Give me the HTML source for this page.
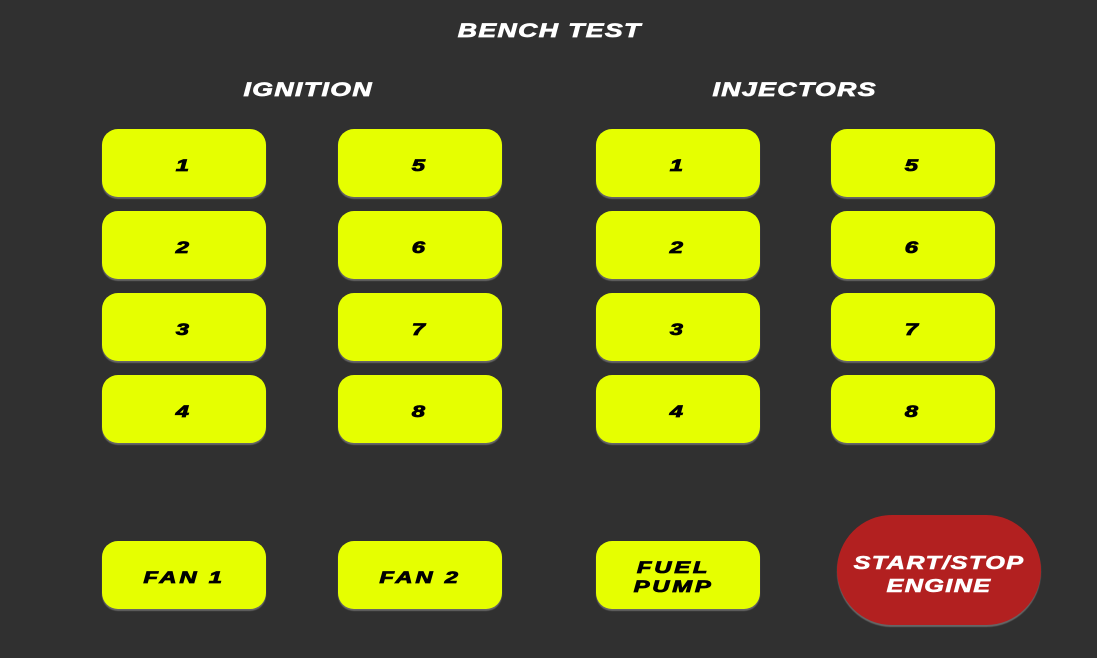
<!DOCTYPE html>
<html><head><style>
body{margin:0;width:1097px;height:658px;background:#303030;position:relative;overflow:hidden;font-family:"Liberation Sans",sans-serif;font-weight:bold;font-style:italic}
.t{position:absolute;color:#fff;text-align:center;letter-spacing:1px;-webkit-text-stroke:0.7px #fff}
.b{position:absolute;width:164px;height:68px;padding-top:4px;box-sizing:border-box;background:#e6ff00;border-radius:16px;box-shadow:0 2px 1px #666;display:flex;align-items:center;justify-content:center;color:#000;font-size:17px;letter-spacing:2px;text-align:center;line-height:19px;-webkit-text-stroke:0.8px #000}
.s{display:inline-block;transform:scaleX(1.4)}
.r{position:absolute;left:837px;top:515px;width:204px;height:110px;padding-top:10px;box-sizing:border-box;border-radius:55px;background:#b22020;box-shadow:0 2px 1px #666;color:#fff;display:flex;align-items:center;justify-content:center;text-align:center;font-size:18px;line-height:23px;letter-spacing:1px;-webkit-text-stroke:0.6px #fff}
</style></head><body>
<div class="t" style="left:400px;top:21px;width:300px;font-size:19px"><span class="s">BENCH TEST</span></div>
<div class="t" style="left:208px;top:80px;width:200px;font-size:19px"><span class="s">IGNITION</span></div>
<div class="t" style="left:695px;top:80px;width:200px;font-size:19px"><span class="s">INJECTORS</span></div>
<div class="b" style="left:102px;top:129px"><span class="s">1</span></div>
<div class="b" style="left:102px;top:211px"><span class="s">2</span></div>
<div class="b" style="left:102px;top:293px"><span class="s">3</span></div>
<div class="b" style="left:102px;top:375px"><span class="s">4</span></div>
<div class="b" style="left:338px;top:129px"><span class="s">5</span></div>
<div class="b" style="left:338px;top:211px"><span class="s">6</span></div>
<div class="b" style="left:338px;top:293px"><span class="s">7</span></div>
<div class="b" style="left:338px;top:375px"><span class="s">8</span></div>
<div class="b" style="left:596px;top:129px"><span class="s">1</span></div>
<div class="b" style="left:596px;top:211px"><span class="s">2</span></div>
<div class="b" style="left:596px;top:293px"><span class="s">3</span></div>
<div class="b" style="left:596px;top:375px"><span class="s">4</span></div>
<div class="b" style="left:831px;top:129px"><span class="s">5</span></div>
<div class="b" style="left:831px;top:211px"><span class="s">6</span></div>
<div class="b" style="left:831px;top:293px"><span class="s">7</span></div>
<div class="b" style="left:831px;top:375px"><span class="s">8</span></div>
<div class="b" style="left:102px;top:541px"><span class="s">FAN 1</span></div>
<div class="b" style="left:338px;top:541px"><span class="s">FAN 2</span></div>
<div class="b" style="left:596px;top:541px;padding-right:8px"><span class="s">FUEL<br>PUMP</span></div>
<div class="r"><span class="s">START/STOP<br>ENGINE</span></div>
</body></html>
